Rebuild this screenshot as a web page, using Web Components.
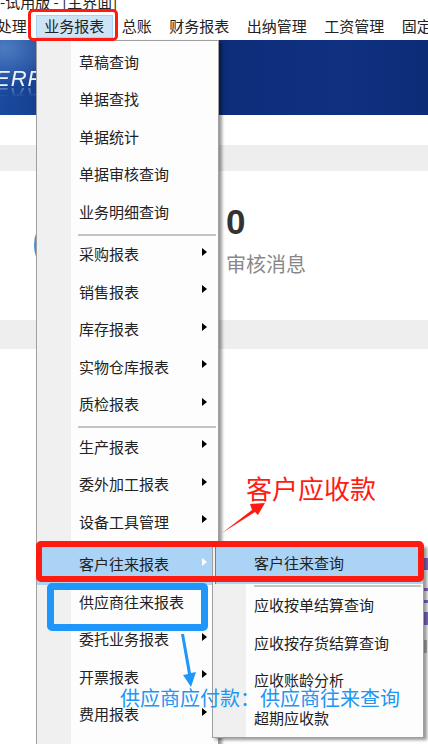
<!DOCTYPE html>
<html lang="zh-CN">
<head>
<meta charset="utf-8">
<title>业务报表</title>
<style>
  html, body { margin: 0; padding: 0; background: #fff; }
  body {
    width: 428px;
    height: 744px;
    overflow: hidden;
    font-family: "Liberation Sans", "Noto Sans CJK SC", sans-serif;
    color: #222;
  }
</style>
</head>
<body>
<erp-window>
  <erp-title>-试用版 - [主界面]</erp-title>
  <erp-menubar>
    <erp-menubar-item>处理</erp-menubar-item>
    <erp-menubar-item active>业务报表</erp-menubar-item>
    <erp-menubar-item>总账</erp-menubar-item>
    <erp-menubar-item>财务报表</erp-menubar-item>
    <erp-menubar-item>出纳管理</erp-menubar-item>
    <erp-menubar-item>工资管理</erp-menubar-item>
    <erp-menubar-item>固定资产</erp-menubar-item>
  </erp-menubar>
  <erp-banner>ERP</erp-banner>
  <erp-gap size="30"></erp-gap>
  <erp-band size="26"></erp-band>
  <erp-stat value="0" label="审核消息"></erp-stat>
  <erp-band size="29"></erp-band>
  <erp-edge-marks></erp-edge-marks>

  <erp-menu style="left:36px;top:40px;width:183px;height:720px;padding-top:3.5px">
    <erp-menu-item>草稿查询</erp-menu-item>
    <erp-menu-item>单据查找</erp-menu-item>
    <erp-menu-item>单据统计</erp-menu-item>
    <erp-menu-item>单据审核查询</erp-menu-item>
    <erp-menu-item>业务明细查询</erp-menu-item>
    <erp-menu-sep></erp-menu-sep>
    <erp-menu-item arrow>采购报表</erp-menu-item>
    <erp-menu-item arrow>销售报表</erp-menu-item>
    <erp-menu-item arrow>库存报表</erp-menu-item>
    <erp-menu-item arrow>实物仓库报表</erp-menu-item>
    <erp-menu-item arrow>质检报表</erp-menu-item>
    <erp-menu-sep></erp-menu-sep>
    <erp-menu-item arrow>生产报表</erp-menu-item>
    <erp-menu-item arrow>委外加工报表</erp-menu-item>
    <erp-menu-item arrow>设备工具管理</erp-menu-item>
    <erp-menu-sep></erp-menu-sep>
    <erp-menu-item arrow active>客户往来报表</erp-menu-item>
    <erp-menu-item>供应商往来报表</erp-menu-item>
    <erp-menu-item arrow>委托业务报表</erp-menu-item>
    <erp-menu-item arrow>开票报表</erp-menu-item>
    <erp-menu-item arrow>费用报表</erp-menu-item>
  </erp-menu>

  <erp-menu sub style="left:212px;top:545px;width:212px;height:193px">
    <erp-menu-item active sub>客户往来查询</erp-menu-item>
    <erp-menu-sep sub></erp-menu-sep>
    <erp-menu-item sub>应收按单结算查询</erp-menu-item>
    <erp-menu-item sub>应收按存货结算查询</erp-menu-item>
    <erp-menu-item sub>应收账龄分析</erp-menu-item>
    <erp-menu-item sub>超期应收款</erp-menu-item>
  </erp-menu>

  <note-box color="#fe1c12" stroke="3.5" style="left:28px;top:9px;width:90px;height:32px"></note-box>
  <note-box color="#fe1c12" stroke="6" style="left:36px;top:541px;width:388px;height:41px"></note-box>
  <note-box color="#1e96fa" stroke="7" style="left:47px;top:583px;width:161px;height:48px"></note-box>
  <note-arrow color="#fe1c12" points="222,533 252,510 250,504 265,503 258,515 255,512"></note-arrow>
  <note-arrow color="#1e96fa" points="181,634 188,674 183,675 191,687 196,672 191,673 184,634"></note-arrow>
  <note-label color="#fe1c12" size="26" style="left:246px;top:470px">客户应收款</note-label>
  <note-label color="#2196f3" size="20" style="left:120px;top:684px">供应商应付款：供应商往来查询</note-label>
</erp-window>

<script>
/**
 * Web Components for the ERP main window screenshot.
 * Page sections flow inside erp-window, menus and the red/blue notes lie over them.
 */

const CJK = '"Noto Sans CJK SC", "Liberation Sans", sans-serif';

class ErpWindow extends HTMLElement {
  constructor() {
    super();
    this.attachShadow({ mode: 'open' }).innerHTML = `
      <style>
        :host {
          display: flex;
          flex-direction: column;
          position: relative;
          width: 428px;
          height: 744px;
          overflow: hidden;
          background: #fff;
        }
      </style>
      <slot></slot>
    `;
  }
}

class ErpTitle extends HTMLElement {
  constructor() {
    super();
    this.attachShadow({ mode: 'open' }).innerHTML = `
      <style>
        :host {
          display: block;
          height: 13px;
          overflow: hidden;
          font: 15px/20px ${CJK};
          color: #222;
          white-space: nowrap;
        }
        div { margin-top: -8px; }
      </style>
      <div><slot></slot></div>
    `;
  }
}

class ErpMenubar extends HTMLElement {
  constructor() {
    super();
    this.attachShadow({ mode: 'open' }).innerHTML = `
      <style>
        :host {
          display: flex;
          height: 27px;
          overflow: hidden;
          padding: 2px 0;
          box-sizing: border-box;
          margin-left: -12px;
          width: 440px;
        }
      </style>
      <slot></slot>
    `;
  }
}

class ErpMenubarItem extends HTMLElement {
  constructor() {
    super();
    this.attachShadow({ mode: 'open' }).innerHTML = `
      <style>
        :host {
          display: flex;
          align-items: center;
          flex: none;
          padding: 0 8.75px 1px;
          height: 23px;
          font: 15px/22px ${CJK};
          color: #222;
          white-space: nowrap;
          box-sizing: border-box;
        }
        :host([active]) {
          background: #cce4f7;
          box-shadow: inset 0 0 0 1px #a9d3f2;
        }
      </style>
      <slot></slot>
    `;
  }
}

class ErpBanner extends HTMLElement {
  constructor() {
    super();
    this.attachShadow({ mode: 'open' }).innerHTML = `
      <style>
        :host {
          display: block;
          height: 75px;
          box-sizing: border-box;
          padding-top: 28px;
          overflow: hidden;
          background:
            radial-gradient(ellipse 60px 40px at 5px 8px, rgba(120,165,225,.55), transparent),
            linear-gradient(90deg, #1a4a9e 0, #123a8a 60px, #0d2d7a 220px, #0f3180 340px, #0c2c78 428px);
        }
        span {
          display: block;
          margin-left: -5px;
          font: italic 22px/22px "Liberation Sans", sans-serif;
          letter-spacing: 1px;
          color: #eef3fb;
          -webkit-box-reflect: below -6px linear-gradient(transparent 40%, rgba(255,255,255,.45));
        }
      </style>
      <span><slot></slot></span>
    `;
  }
}

class ErpGap extends HTMLElement {
  constructor() {
    super();
    this.attachShadow({ mode: 'open' }).innerHTML = `
      <style>:host { display: block; height: ${this.getAttribute('size')}px; background: #fff; }</style>
    `;
  }
}

class ErpBand extends HTMLElement {
  constructor() {
    super();
    this.attachShadow({ mode: 'open' }).innerHTML = `
      <style>:host { display: block; height: ${this.getAttribute('size')}px; background: #eeeeee; }</style>
    `;
  }
}

class ErpStat extends HTMLElement {
  constructor() {
    super();
    this.attachShadow({ mode: 'open' }).innerHTML = `
      <style>
        :host {
          display: flex;
          align-items: center;
          height: 149px;
          padding: 0 0 0 34px;
          box-sizing: border-box;
          gap: 122px;
        }
        .circle { width: 70px; height: 70px; margin-top: -1px; border-radius: 50%; background: #4a8fd2; flex: none; }
        .text { display: flex; flex-direction: column; margin-top: -11px; }
        .value { font: bold 35px/40px "Liberation Sans", sans-serif; color: #333; }
        .label { font: 20px/28px ${CJK}; color: #888; margin-top: 8px; }
      </style>
      <div class="circle"></div>
      <div class="text">
        <div class="value">${this.getAttribute('value')}</div>
        <div class="label">${this.getAttribute('label')}</div>
      </div>
    `;
  }
}

/* sliver of the page content that shows right of the submenu */
class ErpEdgeMarks extends HTMLElement {
  constructor() {
    super();
    this.attachShadow({ mode: 'open' }).innerHTML = `
      <style>
        :host { position: absolute; left: 423px; top: 540px; width: 5px; height: 120px; }
        svg { display: block; }
      </style>
      <svg width="5" height="120" viewBox="0 0 5 120">
        <g fill="#8a6fd0">
          <rect y="18" width="5" height="12"/>
          <rect y="48" width="5" height="3"/>
          <rect y="60" width="5" height="3"/>
          <rect y="72" width="5" height="13"/>
        </g>
        <rect y="100" width="4" height="13" fill="#b9b9b9"/>
      </svg>
    `;
  }
}

class ErpMenu extends HTMLElement {
  constructor() {
    super();
    const column = this.hasAttribute('sub') ? 33 : 34;
    this.attachShadow({ mode: 'open' }).innerHTML = `
      <style>
        :host {
          display: flex;
          flex-direction: column;
          position: absolute;
          box-sizing: border-box;
          background: linear-gradient(90deg, #f0f0f0 ${column}px, #fdfdfd ${column}px);
          border: 1px solid #a0a0a0;
          box-shadow: 3px 2px 3px rgba(0,0,0,.4);
        }
      </style>
      <slot></slot>
    `;
  }
}

class ErpMenuItem extends HTMLElement {
  constructor() {
    super();
    this.attachShadow({ mode: 'open' }).innerHTML = `
      <style>
        :host {
          display: flex;
          align-items: center;
          justify-content: space-between;
          flex: none;
          height: 37.5px;
          padding: 0 11px 3px 42px;
          box-sizing: border-box;
          font: 15px/20px ${CJK};
          color: #222;
          white-space: nowrap;
        }
        :host([sub]) { padding-left: 41px; }
        :host([active]) { background: #aad3f5; }
        :host([active][sub]) { margin-left: 2px; padding-left: 38px; border-left: 1px solid #2e8fe0; }
        .arrow {
          display: none;
          width: 0;
          height: 0;
          margin-bottom: 5px;
          border-left: 5px solid #000;
          border-top: 4.5px solid transparent;
          border-bottom: 4.5px solid transparent;
        }
        :host([arrow]) .arrow { display: block; }
        :host([active]) .arrow { border-left-color: #fff; }
      </style>
      <slot></slot>
      <span class="arrow"></span>
    `;
  }
}

class ErpMenuSep extends HTMLElement {
  constructor() {
    super();
    this.attachShadow({ mode: 'open' }).innerHTML = `
      <style>
        :host {
          display: flex;
          align-items: center;
          flex: none;
          height: 5px;
          padding: 0 2px 0 41px;
        }
        :host([sub]) { height: 4.5px; padding-left: 41px; }
        div { flex: 1; height: 2px; background: #c4c4c4; }
      </style>
      <div></div>
    `;
  }
}

class NoteBox extends HTMLElement {
  constructor() {
    super();
    this.attachShadow({ mode: 'open' }).innerHTML = `
      <style>
        :host {
          display: block;
          position: absolute;
          box-sizing: border-box;
          border: ${this.getAttribute('stroke')}px solid ${this.getAttribute('color')};
          border-radius: 5px;
        }
      </style>
    `;
  }
}

class NoteArrow extends HTMLElement {
  constructor() {
    super();
    this.attachShadow({ mode: 'open' }).innerHTML = `
      <style>
        :host { position: absolute; left: 0; top: 0; width: 428px; height: 744px; pointer-events: none; }
        svg { display: block; }
      </style>
      <svg width="428" height="744" viewBox="0 0 428 744">
        <polygon points="${this.getAttribute('points')}" fill="${this.getAttribute('color')}"/>
      </svg>
    `;
  }
}

class NoteLabel extends HTMLElement {
  constructor() {
    super();
    const size = this.getAttribute('size');
    this.attachShadow({ mode: 'open' }).innerHTML = `
      <style>
        :host {
          display: block;
          position: absolute;
          font: ${size}px/1.4 ${CJK};
          color: ${this.getAttribute('color')};
          white-space: nowrap;
        }
      </style>
      <slot></slot>
    `;
  }
}

// Register custom elements
customElements.define('erp-window', ErpWindow);
customElements.define('erp-title', ErpTitle);
customElements.define('erp-menubar', ErpMenubar);
customElements.define('erp-menubar-item', ErpMenubarItem);
customElements.define('erp-banner', ErpBanner);
customElements.define('erp-gap', ErpGap);
customElements.define('erp-band', ErpBand);
customElements.define('erp-stat', ErpStat);
customElements.define('erp-edge-marks', ErpEdgeMarks);
customElements.define('erp-menu', ErpMenu);
customElements.define('erp-menu-item', ErpMenuItem);
customElements.define('erp-menu-sep', ErpMenuSep);
customElements.define('note-box', NoteBox);
customElements.define('note-arrow', NoteArrow);
customElements.define('note-label', NoteLabel);
</script>
</body>
</html>
